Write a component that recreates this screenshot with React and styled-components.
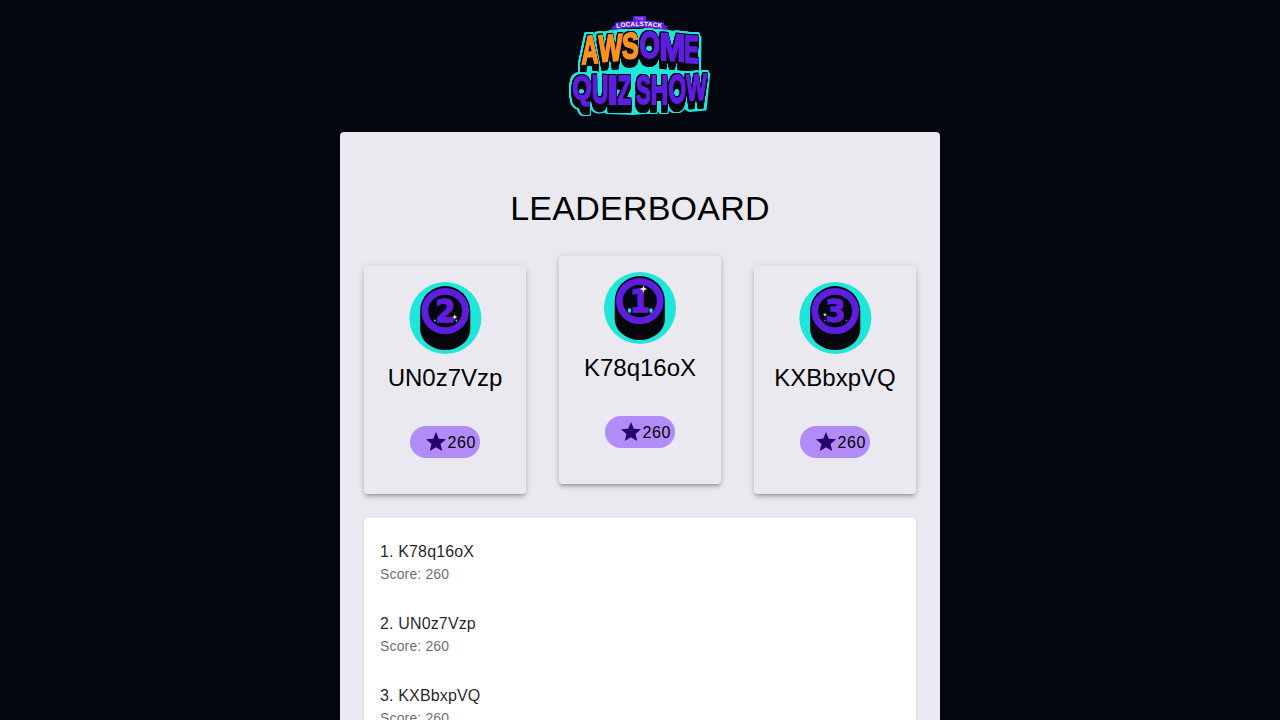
import React from "react";
import styled, { createGlobalStyle } from "styled-components";

const TEAL = "#1ee6da";
const PURPLE = "#5f1de0";
const ORANGE = "#fb9324";
const INK = "#05070d";

const GlobalStyle = createGlobalStyle`
  *, *::before, *::after { box-sizing: border-box; }
  body {
    margin: 0;
    background: #02060f;
    color: rgba(0, 0, 0, 0.87);
    font-family: Helvetica, "Liberation Sans", Arial, sans-serif;
    font-size: 16px;
    line-height: 1.5;
    letter-spacing: 0.00938em;
    -webkit-font-smoothing: antialiased;
  }
`;

const Page = styled.div`
  display: flex;
  flex-direction: column;
  align-items: center;
  height: 100vh;
  overflow: hidden;
  padding-top: 16px;
  gap: 16px;
`;

const LogoArt = styled.svg`
  display: block;
  flex: none;
  width: 140px;
  height: 100px;
  overflow: visible;
`;

/* Each word gets a dark outline, a downward extrusion and a teal rim. */
const LogoWord = styled.g`
  filter: drop-shadow(0 -1px 0 ${INK}) drop-shadow(0.8px 0 0 ${INK}) drop-shadow(-0.8px 0 0 ${INK})
    drop-shadow(0 1px 0 ${INK}) drop-shadow(0 2px 0 ${INK}) drop-shadow(0 5px 0 ${INK})
    drop-shadow(1.2px 0 0 ${TEAL}) drop-shadow(-1.2px 0 0 ${TEAL}) drop-shadow(0 1.6px 0 ${TEAL})
    drop-shadow(0 -1.2px 0 ${TEAL});
`;

const Panel = styled.main`
  flex: none;
  width: 600px;
  padding: 55px 24px 24px;
  border-radius: 4px;
  background: #eae9ef;
`;

const Title = styled.h1`
  margin: 0 0 37px;
  color: #000;
  font-size: 34px;
  font-weight: 400;
  line-height: 42px;
  letter-spacing: 0.00735em;
  text-align: center;
`;

const Podium = styled.section`
  display: flex;
  justify-content: space-between;
  margin-bottom: 24px;
`;

const PodiumCard = styled.article`
  display: flex;
  flex-direction: column;
  align-items: center;
  width: 162px;
  height: 228px;
  padding-top: 16px;
  border-radius: 4px;
  background: #eae9ef;
  color: #000;
  transform: translateY(${(p) => (p.$raised ? "-10px" : "0")});
  box-shadow: 0 3px 3px -2px rgba(0, 0, 0, 0.2), 0 3px 4px 0 rgba(0, 0, 0, 0.14),
    0 1px 8px 0 rgba(0, 0, 0, 0.12);
`;

const MedalArt = styled.svg`
  display: block;
  width: 72px;
  height: 72px;
  overflow: visible;
`;

const PlayerName = styled.h2`
  margin: 8px 0 32px;
  font-size: 24px;
  font-weight: 400;
  line-height: 32px;
  letter-spacing: 0;
`;

const ScoreChip = styled.div`
  display: flex;
  align-items: center;
  width: 70px;
  height: 32px;
  padding: 0 0 0 14px;
  border-radius: 16px;
  background: #b18cf9;
  line-height: 24px;
  letter-spacing: 0.6px;
`;

const Score = styled.span`
  padding-top: 1px;
`;

const StarIcon = styled.svg`
  flex: none;
  width: 24px;
  height: 24px;
  margin-right: -0.5px;
  fill: #25006b;
`;

const Standings = styled.ol`
  margin: 0;
  padding: 8px 0;
  list-style: none;
  border-radius: 4px;
  background: #fff;
  box-shadow: 0 2px 1px -1px rgba(0, 0, 0, 0.2), 0 1px 1px 0 rgba(0, 0, 0, 0.14),
    0 1px 3px 0 rgba(0, 0, 0, 0.12);
`;

const Standing = styled.li`
  height: 72px;
  padding: 14px 16px;
`;

const StandingName = styled.div`
  line-height: 24px;
`;

const StandingScore = styled.div`
  color: rgba(0, 0, 0, 0.6);
  font-size: 14px;
  line-height: 20px;
  letter-spacing: 0.01071em;
`;

// Horizontal ink extents of each capital at a font size of 100.
const INK_EXTENT = {
  A: [0, 72], W: [0, 94], S: [4, 63], O: [4, 74], M: [7, 76], E: [7, 63],
  Q: [4, 74], U: [6, 66], I: [7, 21], Z: [2, 58], H: [7, 65],
};

// Letter, left, top, right, bottom, vertical skew, colour.
const TOP_WORD = [
  ["A", 581.4, 36.2, 598.4, 63.4, -4, ORANGE],
  ["W", 598.4, 34.8, 622.2, 60.8, -4, ORANGE],
  ["S", 623, 33.2, 637.8, 58.4, -3, ORANGE],
  ["O", 640.6, 32.2, 659, 58.2, 0, PURPLE],
  ["M", 661.6, 34.2, 683, 60.6, 4, PURPLE],
  ["E", 685.8, 36, 698.2, 62.8, 4, PURPLE],
];

const BOTTOM_WORD = [
  ["Q", 573.2, 75.2, 590.8, 98.6, 0, PURPLE],
  ["U", 593.2, 75.6, 607, 102.8, 2, PURPLE],
  ["I", 610, 75.6, 615.4, 103.6, 0, PURPLE],
  ["Z", 618, 75.6, 630.6, 103.6, 0, PURPLE],
  ["S", 637, 75.6, 650, 103.8, 0, PURPLE],
  ["H", 652.2, 75.6, 666.4, 103.6, 0, PURPLE],
  ["O", 669.4, 75.4, 685.2, 102.6, -1, PURPLE],
  ["W", 686.2, 74.8, 706.6, 100, -3, PURPLE],
];

function LogoLetter({ spec }) {
  const [char, left, top, right, bottom, skew, color] = spec;
  const [inkLeft, inkRight] = INK_EXTENT[char];
  const middle = (inkLeft + inkRight) / 2;
  const sx = (right - left) / (inkRight - inkLeft);
  const sy = (bottom - top) / 69;
  return (
    <text
      transform={`translate(${(left + right) / 2} ${bottom}) skewY(${skew}) scale(${sx} ${sy}) translate(${-middle} 0)`}
      fontSize="100"
      fontWeight="700"
      letterSpacing="0"
      fill={color}
      stroke={color}
      strokeWidth="5"
      strokeMiterlimit="2"
    >
      {char}
    </text>
  );
}

function Logo() {
  return (
    <LogoArt viewBox="570 16 140 100" fontFamily='"Liberation Sans", Arial, sans-serif'>
      <path
        fill={TEAL}
        d="M584.5 35.5 Q612 30 613 29 H666 Q668 30.500 701.500 36 L701 73 H710.300 L706.500 110.500 L689 112 L684 109 L667 111 L650 113.500 L633 115 L608 114 L592 109 L580 108 Q570 107 570 97 L570.500 82 Q572 74 579 72.500 Z"
      />
      <path fill={INK} d="M586 37 L584 37.500 L580.500 66 L582 66 Z" />
      <path fill={INK} d="M572.500 84 L574.500 86 V106 Q572 104 572 97 Z" />
      <LogoWord>
        {TOP_WORD.map((spec, i) => (
          <LogoLetter key={i} spec={spec} />
        ))}
      </LogoWord>
      <LogoWord>
        {BOTTOM_WORD.map((spec, i) => (
          <LogoLetter key={i} spec={spec} />
        ))}
      </LogoWord>
      <path
        fill={PURPLE}
        d="M633 16 H646 V20.500 Q656 21 664 22.500 L664.500 25.500 L667 26 L667.500 30.500 L660 29 Q640 26 620 29 L612 30.500 L612.500 26 L615 25.500 L615.500 22.500 Q624 21 633 20.500 Z"
      />
      <path id="logo-banner-arc" d="M616.500 28 Q640 24.200 663 28" fill="none" />
      <text fontSize="6.400" fontWeight="700" letterSpacing="0" fill="#fff">
        <textPath href="#logo-banner-arc" textLength="45.500">
          LOCALSTACK
        </textPath>
      </text>
      <text x="639.500" y="19.900" fontSize="3.600" fontWeight="700" letterSpacing="0.400" fill="#b08df0" textAnchor="middle">
        THE
      </text>
    </LogoArt>
  );
}

const SPARKLES = {
  1: { x: 39.5, y: 17, r: 3.8 },
  2: { x: 45.8, y: 35, r: 2.8 },
  3: { x: 26, y: 32.8, r: 2.2 },
};

function Medal({ place }) {
  const { x, y, r } = SPARKLES[place];
  const q = r / 4;
  const shift = place === 1 ? 0 : 0.4;
  const glint = { 1: 2.4, 2: 1.2, 3: 0.8 }[place];
  return (
    <MedalArt viewBox="0 0 72 72">
      <g transform={`translate(${shift} 0)`}>
        <circle cx="36" cy="36" r="36" fill={TEAL} />
        <path d="M10.700 29 A25.100 25 0 0 1 60.900 29 V47 A25.100 21 0 0 1 10.700 47 Z" fill={INK} />
        <ellipse cx="35.800" cy="29" rx="20.400" ry="19.700" fill="none" stroke={PURPLE} strokeWidth="6.800" />
        <ellipse cx="25.500" cy="38.600" rx={glint * 0.7} ry={glint} fill={TEAL} />
        <ellipse cx="47" cy="38.600" rx={glint * 0.7} ry={glint} fill={TEAL} />
        <text
          transform="translate(36 40) scale(0.920 1)"
          fontSize="31.800"
          fontFamily='"DejaVu Sans", sans-serif'
          fontWeight="700"
          letterSpacing="0"
          textAnchor="middle"
          fill={PURPLE}
          stroke={PURPLE}
          strokeWidth="1.300"
        >
          {place}
        </text>
      </g>
      <path
        fill="#fff"
        d={`M${x} ${y - r} L${x + q} ${y - q} L${x + r} ${y} L${x + q} ${y + q} L${x} ${y + r} L${x - q} ${y + q} L${x - r} ${y} L${x - q} ${y - q} Z`}
      />
    </MedalArt>
  );
}

const PLAYERS = [
  { place: 1, name: "K78q16oX", score: 260 },
  { place: 2, name: "UN0z7Vzp", score: 260 },
  { place: 3, name: "KXBbxpVQ", score: 260 },
];

const PODIUM_ORDER = [PLAYERS[1], PLAYERS[0], PLAYERS[2]];

export default function App() {
  return (
    <>
      <GlobalStyle />
      <Page>
        <Logo />
        <Panel>
          <Title>LEADERBOARD</Title>
          <Podium>
            {PODIUM_ORDER.map(({ place, name, score }) => (
              <PodiumCard key={place} $raised={place === 1}>
                <Medal place={place} />
                <PlayerName>{name}</PlayerName>
                <ScoreChip>
                  <StarIcon viewBox="0 0 24 24">
                    <path d="M12 17.270 18.180 21l-1.640-7.030L22 9.240l-7.190-.610L12 2 9.190 8.630 2 9.240l5.460 4.730L5.820 21z" />
                  </StarIcon>
                  <Score>{score}</Score>
                </ScoreChip>
              </PodiumCard>
            ))}
          </Podium>
          <Standings>
            {PLAYERS.map(({ place, name, score }) => (
              <Standing key={place}>
                <StandingName>{`${place}. ${name}`}</StandingName>
                <StandingScore>Score: {score}</StandingScore>
              </Standing>
            ))}
          </Standings>
        </Panel>
      </Page>
    </>
  );
}
